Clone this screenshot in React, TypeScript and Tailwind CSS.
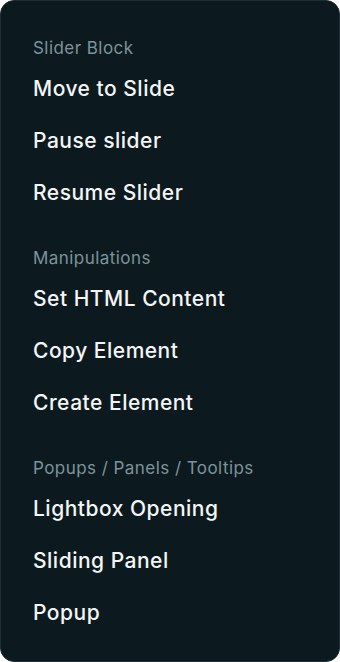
import React from "react";

const sections = [
  { title: "Slider Block", items: ["Move to Slide", "Pause slider", "Resume Slider"] },
  { title: "Manipulations", items: ["Set HTML Content", "Copy Element", "Create Element"] },
  { title: "Popups / Panels / Tooltips", items: ["Lightbox Opening", "Sliding Panel", "Popup"] },
];

function App() {
  return (
    <div className="h-[662px] w-[340px] bg-white font-['Inter',sans-serif]">
      <div className="h-[662px] w-[340px] rounded-[14px] border border-[#1e2e34] bg-[#0c1a1f] pl-[32px] pt-[35px]">
        {sections.map((s, i) => (
          <div key={s.title} className={i > 0 ? "mt-[27px]" : ""}>
            <p className="mb-[3px] text-[17px] leading-6 tracking-[0.45px] text-[#7e939a]">{s.title}</p>
            <ul>
              {s.items.map((item) => (
                <li key={item} className="py-3 text-[21px] font-medium leading-7 tracking-[0.5px] text-[#f4f6f6]">
                  {item}
                </li>
              ))}
            </ul>
          </div>
        ))}
      </div>
    </div>
  );
}

export default App;
